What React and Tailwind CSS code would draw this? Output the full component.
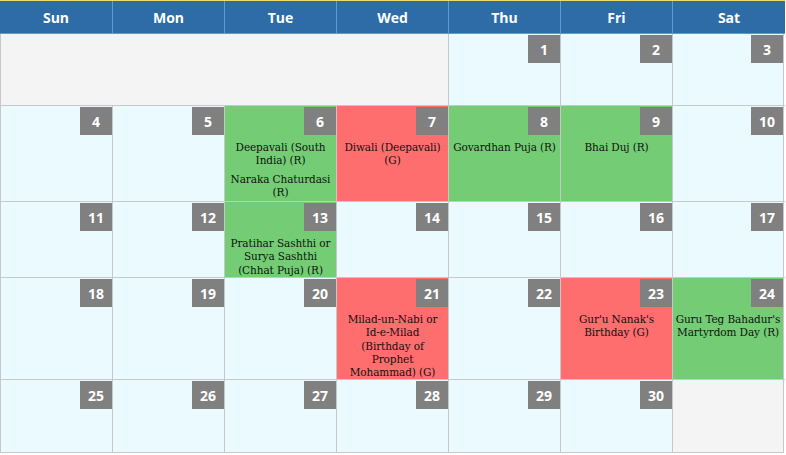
import React from "react";

const days = ["Sun", "Mon", "Tue", "Wed", "Thu", "Fri", "Sat"];

const G = "bg-[#74cd74]";
const R = "bg-[#fe6e6e]";
const C = "bg-[#eafaff]";
const E = "bg-[#f4f4f4]";

const rows = [
  {
    h: "h-[71px]",
    cells: [
      { span: 4, bg: E },
      { n: 1, bg: C },
      { n: 2, bg: C },
      { n: 3, bg: C },
    ],
  },
  {
    h: "h-[96px]",
    cells: [
      { n: 4, bg: C },
      { n: 5, bg: C },
      { n: 6, bg: G, ev: [["Deepavali (South", "India) (R)"], ["Naraka Chaturdasi", "(R)"]] },
      { n: 7, bg: R, ev: [["Diwali (Deepavali)", "(G)"]] },
      { n: 8, bg: G, ev: [["Govardhan Puja (R)"]] },
      { n: 9, bg: G, ev: [["Bhai Duj (R)"]] },
      { n: 10, bg: C },
    ],
  },
  {
    h: "h-[76px]",
    cells: [
      { n: 11, bg: C },
      { n: 12, bg: C },
      { n: 13, bg: G, ev: [["Pratihar Sashthi or", "Surya Sashthi", "(Chhat Puja) (R)"]] },
      { n: 14, bg: C },
      { n: 15, bg: C },
      { n: 16, bg: C },
      { n: 17, bg: C },
    ],
  },
  {
    h: "h-[102px]",
    cells: [
      { n: 18, bg: C },
      { n: 19, bg: C },
      { n: 20, bg: C },
      { n: 21, bg: R, ev: [["Milad-un-Nabi or", "Id-e-Milad", "(Birthday of", "Prophet", "Mohammad) (G)"]] },
      { n: 22, bg: C },
      { n: 23, bg: R, ev: [["Gur'u Nanak's", "Birthday (G)"]] },
      { n: 24, bg: G, ev: [["Guru Teg Bahadur's", "Martyrdom Day (R)"]] },
    ],
  },
  {
    h: "h-[74px]",
    last: true,
    cells: [
      { n: 25, bg: C },
      { n: 26, bg: C },
      { n: 27, bg: C },
      { n: 28, bg: C },
      { n: 29, bg: C },
      { n: 30, bg: C },
      { bg: E },
    ],
  },
];

function Cell({ c, isLast, rowLast }) {
  const w = c.span === 4 ? "w-[448px]" : "w-[112px]";
  return (
    <div
      className={`${w} ${c.bg} border-l border-[#c8c8c8] ${isLast ? "border-r" : ""} ${rowLast ? "border-b" : ""} flex flex-col items-stretch`}
    >
      {c.n != null && (
        <div className="flex justify-end">
          <div className="w-[32px] h-[28px] bg-[#808080] text-white font-bold text-[14px] flex items-center justify-center mt-[1px] font-['Open_Sans',sans-serif]">
            {c.n}
          </div>
        </div>
      )}
      {c.ev && (
        <div className="mt-[6px] flex flex-col gap-[5px]">
          {c.ev.map((lines, i) => (
            <div
              key={i}
              className="text-center text-[10.5px] leading-[13.3px] text-[#111] font-['DejaVu_Serif',serif] tracking-[-0.1px]"
            >
              {lines.map((l, j) => (
                <div key={j} className="whitespace-nowrap">
                  {l}
                </div>
              ))}
            </div>
          ))}
        </div>
      )}
    </div>
  );
}

export default function App() {
  return (
    <div className="w-[786px] h-[455px] bg-white font-['Open_Sans',sans-serif]">
      <div className="w-[785px]">
        <div className="h-[1px] bg-[#ecdc6a]" />
        <div className="flex h-[33px] bg-[#2d6ca7] border-b border-[#5b9ad6]">
          {days.map((d, i) => (
            <div
              key={d}
              className={`${i === 6 ? "w-[113px]" : "w-[112px]"} ${i > 0 ? "border-l border-[#5b9ad6]" : ""} flex items-center justify-center text-white font-bold text-[14px]`}
            >
              {d}
            </div>
          ))}
        </div>
        {rows.map((r, ri) => (
          <div
            key={ri}
            className={`flex ${r.h} ${ri > 0 ? "border-t border-[#c8c8c8]" : ""}`}
          >
            {r.cells.map((c, ci) => (
              <Cell key={ci} c={c} isLast={ci === r.cells.length - 1} rowLast={r.last} />
            ))}
          </div>
        ))}
      </div>
    </div>
  );
}
